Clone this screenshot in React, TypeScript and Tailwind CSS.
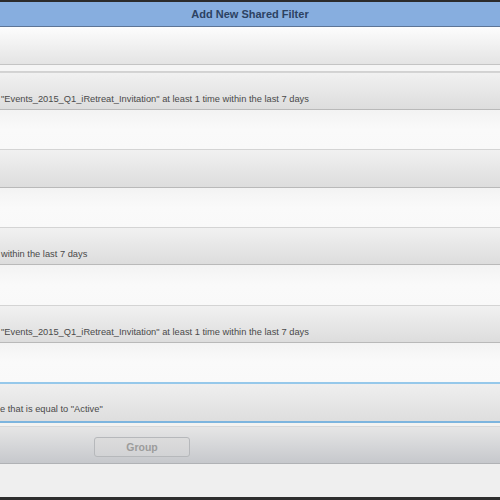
const rowText = 'text-[9.3px] leading-[12px] text-[#4a4a4a] whitespace-nowrap'

function GrayRow({ text, h = 'h-[38px]' }: { text?: string; h?: string }) {
  return (
    <div className={`${h} shrink-0 bg-gradient-to-b from-[#f1f1f1] to-[#dddddd] border-t border-[#d4d4d4] border-b border-b-[#b9b9b9] pt-[20px] pl-[1px]`}>
      {text && <p className={rowText}>{text}</p>}
    </div>
  )
}

function WhiteRow({ h = 'h-[39px]' }: { h?: string }) {
  return <div className={`${h} shrink-0 bg-gradient-to-b from-[#f3f3f3] via-[#fafafa] to-[#f9f9f9]`} />
}

export default function App() {
  return (
    <div className="w-[500px] h-[500px] flex flex-col overflow-hidden bg-[#f9f9f9]" style={{ fontFamily: '"Liberation Sans", Arial, sans-serif' }}>
      <div className="h-[2px] shrink-0 bg-[#2b2b2b]" />
      {/* title bar */}
      <div className="h-[25px] shrink-0 bg-[#87aedf] border-b border-[#5d7596] flex items-center justify-center">
        <span className="text-[11px] font-bold text-[#2c4262] leading-none">Add New Shared Filter</span>
      </div>
      <div className="h-[37px] shrink-0 bg-gradient-to-b from-[#fdfdfd] to-[#e4e4e4]" />
      <div className="h-[8px] shrink-0 bg-[#f5f5f5] border-t border-[#c4c4c4] border-b border-b-[#d2d2d2]" />

      <GrayRow text={'"Events_2015_Q1_iRetreat_Invitation" at least 1 time within the last 7 days'} />
      <WhiteRow />
      <GrayRow h="h-[39px]" />
      <WhiteRow />
      <GrayRow text="within the last 7 days" h="h-[38px]" />
      <WhiteRow h="h-[40px]" />
      <GrayRow text={'"Events_2015_Q1_iRetreat_Invitation" at least 1 time within the last 7 days'} />
      <WhiteRow />

      {/* selected row */}
      <div className="h-[41px] shrink-0 bg-gradient-to-b from-[#efefef] to-[#dedede] border-t-2 border-[#96c8ea] border-b-2 border-b-[#7db5de] pt-[19px]">
        <p className={rowText}>e that is equal to "Active"</p>
      </div>
      <div className="h-[4px] shrink-0 bg-[#f3f3f1] border-b border-[#d8d8d8]" />

      {/* footer */}
      <div className="h-[37px] shrink-0 bg-gradient-to-b from-[#e6e6e6] to-[#c6c8cc] border-b border-[#b0b2b5] pt-[7px] pl-[94px]">
        <button className="w-[96px] h-[20px] rounded-[3px] border border-[#b6b8bb] bg-gradient-to-b from-[#dcdcdc] to-[#d2d3d5] text-[10.5px] font-bold text-[#9c9c9c] leading-none">
          Group
        </button>
      </div>
      <div className="h-[33px] shrink-0 bg-[#efefef]" />
      <div className="h-[3px] shrink-0 bg-[#2e2e2e]" />
    </div>
  )
}
